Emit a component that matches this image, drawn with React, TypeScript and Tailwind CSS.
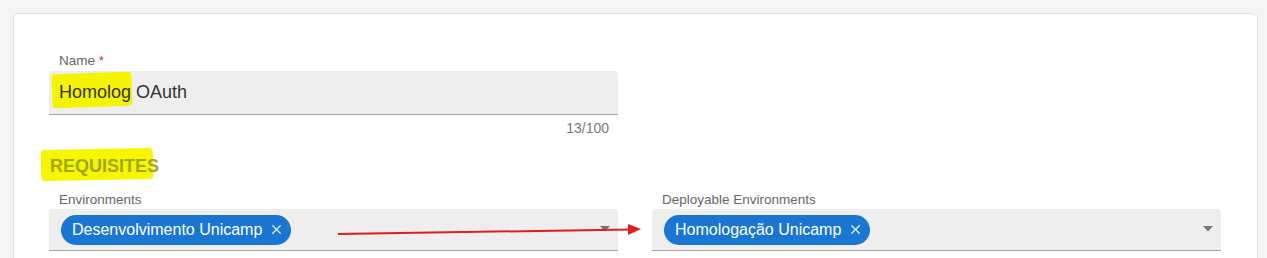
import React from 'react';
import { X } from 'lucide-react';

const Chip: React.FC<{ label: string }> = ({ label }) => (
    <span className="inline-flex h-[30px] items-center gap-[7px] rounded-full bg-[#1976d2] pl-[11px] pr-[7px] text-[16px] text-white">
        {label}
        <X className="h-[15px] w-[15px] text-white/90" strokeWidth={2} />
    </span>
);

const Caret: React.FC = () => (
    <svg className="absolute right-[8px] top-[17px]" width="10" height="6" viewBox="0 0 10 6">
        <path d="M0 0h10L5 5.5z" fill="#757575" />
    </svg>
);

const SelectField: React.FC<{ label: string; chip: string }> = ({ label, chip }) => (
    <div>
        <div className="h-4 pl-[10px] text-[13.5px] leading-4 text-[#666]">{label}</div>
        <div className="relative mt-[1px] flex h-[42px] items-center rounded-t border-b border-[#a8a8a8] bg-[#eeeeee] pl-[12px]">
            <Chip label={chip} />
            <Caret />
        </div>
    </div>
);

export default function App() {
    return (
        <div className="h-[258px] overflow-hidden bg-[#f5f5f5] pl-[13px] pr-[9px] pt-[13px] font-['Liberation_Sans',Arial,sans-serif]">
            <div className="relative h-[260px] rounded-md border border-[#e0e0e0] bg-white pl-[35px] pr-[36px] pt-[39px]">
                <div className="grid grid-cols-2 gap-x-[34px]">
                    <div>
                        <div className="h-4 pl-[10px] text-[13.5px] leading-4 text-[#666]">
                            Name <span className="text-[#d32f2f]">*</span>
                        </div>
                        <div className="mt-[2px] flex h-[44px] items-center rounded-t border-b border-[#a8a8a8] bg-[#eeeeee] pl-[10px] text-[18px] text-[#333]">
                            <span className="relative">
                                <span className="absolute -left-[7px] -top-[6px] h-[34px] w-[80px] -rotate-2 rounded-sm bg-[#f4f400]" />
                                <span className="relative">Homolog</span>
                            </span>
                            <span>&nbsp;OAuth</span>
                        </div>
                        <div className="mt-[5px] pr-[9px] text-right text-[14px] leading-4 text-[#777]">13/100</div>
                    </div>
                    <div />
                </div>

                <div className="mt-[12px] h-[36px]">
                    <span className="relative inline-block pl-[1px] text-[18px] font-bold leading-[36px]">
                        <span className="absolute -left-[8px] top-[1px] h-[31px] w-[112px] -rotate-1 rounded-sm bg-[#f6f600]" />
                        <span className="relative text-[#a3a81a]">REQUISITES</span>
                    </span>
                </div>

                <div className="mt-[8px] grid grid-cols-2 gap-x-[34px]">
                    <SelectField label="Environments" chip="Desenvolvimento Unicamp" />
                    <SelectField label="Deployable Environments" chip="Homologação Unicamp" />
                </div>

                <svg className="pointer-events-none absolute left-[324px] top-[208px]" width="310" height="16" viewBox="0 0 310 16">
                    <path d="M0 12 L292 7.5" stroke="#e21d1d" strokeWidth="2" />
                    <path d="M290 2 L303 7 L290 13 Z" fill="#e21d1d" />
                </svg>
            </div>
        </div>
    );
}
